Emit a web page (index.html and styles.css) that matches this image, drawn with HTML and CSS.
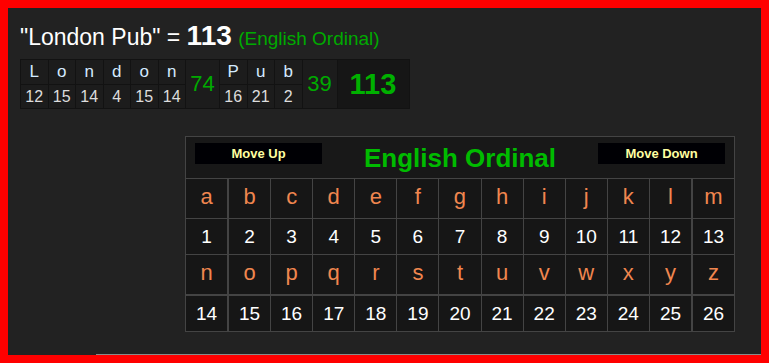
FILE: index.html
```html
<!DOCTYPE html>
<html>
<head>
<meta charset="utf-8">
<link rel="stylesheet" href="styles.css">
</head>
<body>
<div class="frame">
  <div class="content">
    <div class="title">"London Pub" = <b class="total">113</b> <span class="cname">(English Ordinal)</span></div>
    <table class="breakdown">
      <tr>
        <td class="ltr">L</td><td class="ltr">o</td><td class="ltr">n</td><td class="ltr">d</td><td class="ltr">o</td><td class="ltr">n</td>
        <td class="wsum" rowspan="2">74</td>
        <td class="ltr">P</td><td class="ltr">u</td><td class="ltr">b</td>
        <td class="wsum w39" rowspan="2">39</td>
        <td class="gsum" rowspan="2">113</td>
      </tr>
      <tr>
        <td class="num">12</td><td class="num">15</td><td class="num">14</td><td class="num">4</td><td class="num">15</td><td class="num">14</td>
        <td class="num">16</td><td class="num">21</td><td class="num">2</td>
      </tr>
    </table>
    <div class="cipher">
      <div class="head">
        <div class="btn">Move Up</div>
        <div class="ctitle">English Ordinal</div>
        <div class="btn">Move Down</div>
      </div>
      <div class="grid">
        <div class="c l first">a</div><div class="c l">b</div><div class="c l">c</div><div class="c l">d</div><div class="c l">e</div><div class="c l">f</div><div class="c l">g</div><div class="c l">h</div><div class="c l">i</div><div class="c l">j</div><div class="c l">k</div><div class="c l">l</div><div class="c l last">m</div>
        <div class="c n first">1</div><div class="c n">2</div><div class="c n">3</div><div class="c n">4</div><div class="c n">5</div><div class="c n">6</div><div class="c n">7</div><div class="c n">8</div><div class="c n">9</div><div class="c n">10</div><div class="c n">11</div><div class="c n">12</div><div class="c n last">13</div>
        <div class="c l first">n</div><div class="c l">o</div><div class="c l">p</div><div class="c l">q</div><div class="c l">r</div><div class="c l">s</div><div class="c l">t</div><div class="c l">u</div><div class="c l">v</div><div class="c l">w</div><div class="c l">x</div><div class="c l">y</div><div class="c l last">z</div>
        <div class="c n first b2">14</div><div class="c n b2">15</div><div class="c n b2">16</div><div class="c n b2">17</div><div class="c n b2">18</div><div class="c n b2">19</div><div class="c n b2">20</div><div class="c n b2">21</div><div class="c n b2">22</div><div class="c n b2">23</div><div class="c n b2">24</div><div class="c n b2">25</div><div class="c n last b2">26</div>
      </div>
    </div>
  </div>
  <div class="bottomline"></div>
</div>
</body>
</html>
```

FILE: styles.css
```css
html, body {
  margin: 0;
  padding: 0;
  background: #ff0000;
}
.frame {
  box-sizing: border-box;
  width: 769px;
  height: 363px;
  border: 8px solid #ff0000;
  background: #222222;
  display: flex;
  flex-direction: column;
  font-family: "Liberation Sans", Arial, sans-serif;
  overflow: hidden;
}
.content {
  flex: 1;
  padding-left: 12px;
}
.title {
  margin-top: 13px;
  height: 31px;
  font-size: 23px;
  line-height: 30px;
  color: #ffffff;
  white-space: nowrap;
}
.total {
  font-size: 28px;
  font-weight: bold;
}
.cname {
  font-size: 19px;
  color: #00aa00;
}
.breakdown {
  margin-top: 7px;
  border-collapse: separate;
  border-spacing: 1px;
  background: #121212;
}
.breakdown td {
  padding: 0;
  text-align: center;
  background: #1c1c1c;
}
.ltr {
  width: 26.5px;
  height: 24px;
  font-size: 17px;
  color: #d4eaff;
}
.num {
  width: 26.5px;
  height: 23px;
  font-size: 16px;
  color: #dddddd;
}
.wsum {
  width: 33px;
  font-size: 22px;
  color: #00aa00;
}
.w39 {
  width: 34px;
}
.breakdown td.gsum {
  width: 71px;
  font-size: 29px;
  font-weight: bold;
  color: #00b000;
  background: #161616;
}
.cipher {
  margin-top: 27px;
  margin-left: 165px;
  width: 550px;
  box-sizing: border-box;
  border: 1px solid #444444;
  background: #181818;
}
.head {
  height: 42px;
  display: flex;
  align-items: flex-start;
  padding: 6px 9px 0 9px;
  box-sizing: border-box;
  border-bottom: 1px solid #444444;
}
.btn {
  width: 127px;
  height: 21px;
  line-height: 21px;
  background: #000004;
  color: #ffffa0;
  font-size: 13px;
  font-weight: bold;
  text-align: center;
}
.ctitle {
  flex: 1;
  text-align: center;
  color: #00bb00;
  font-size: 26px;
  font-weight: bold;
  line-height: 30px;
}
.grid {
  display: grid;
  grid-template-columns: 42px repeat(11, 1fr) 42px;
  grid-template-rows: 39px 35px 39px 36px;
  gap: 1px;
  background: #444444;
}
.c {
  background: #161616;
  display: flex;
  align-items: center;
  justify-content: center;
  box-sizing: border-box;
}
.c.first {
  border-right: 1px solid #444444;
}
.c.last {
  border-left: 1px solid #444444;
}
.c.b2 {
  border-top: 1px solid #444444;
}
.l {
  color: #f0864f;
  font-size: 22px;
  padding-bottom: 3px;
}
.n {
  color: #ffffff;
  font-size: 19px;
}
.bottomline {
  margin-left: 88px;
  height: 1px;
  background: #8a8a8a;
}
```
